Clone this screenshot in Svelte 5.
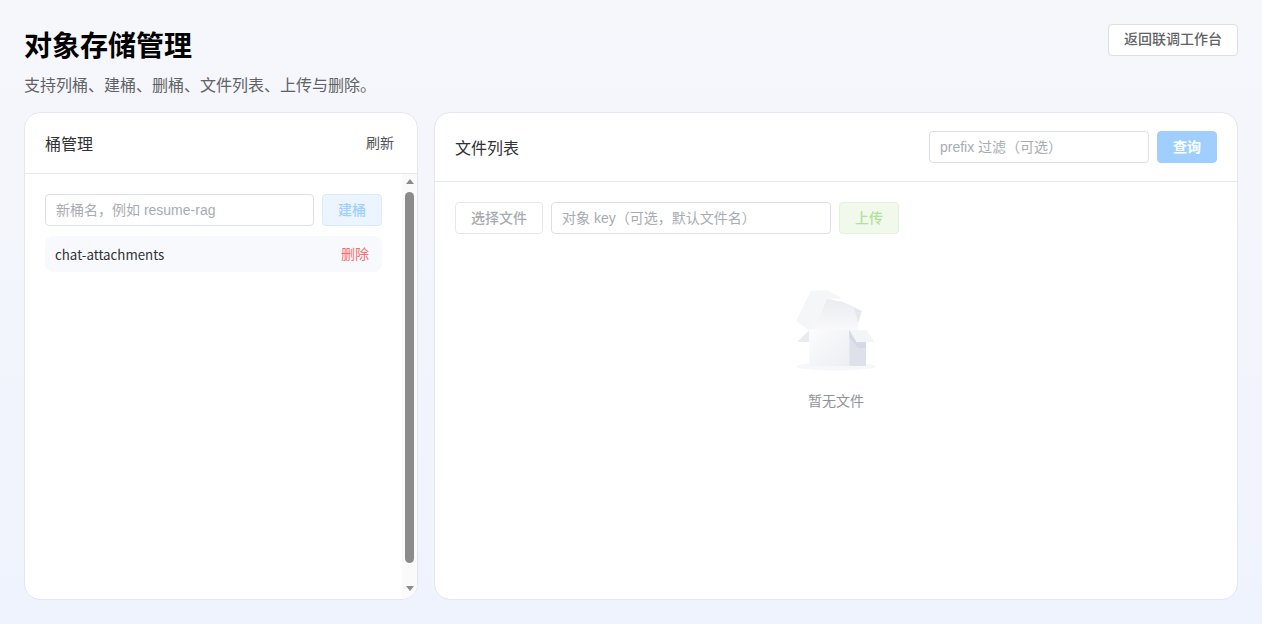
<script lang="ts">
	let bucketName = $state('');
	let prefix = $state('');
	let objectKey = $state('');

	const buckets = ['chat-attachments'];
</script>

<div class="page">
	<header class="page-head">
		<div>
			<h1>对象存储管理</h1>
			<p>支持列桶、建桶、删桶、文件列表、上传与删除。</p>
		</div>
		<button class="btn back">返回联调工作台</button>
	</header>

	<div class="grid">
		<section class="card">
			<div class="card-head left-head">
				<span class="card-title">桶管理</span>
				<button class="link">刷新</button>
			</div>
			<div class="bucket-pane">
				<div class="bucket-body">
					<div class="row">
						<input class="input grow" placeholder="新桶名，例如 resume-rag" bind:value={bucketName} />
						<button class="btn create" disabled>建桶</button>
					</div>
					{#each buckets as b}
						<div class="bucket">
							<span class="bucket-name">{b}</span>
							<button class="link danger">删除</button>
						</div>
					{/each}
				</div>
				<div class="scrollbar" aria-hidden="true">
					<span class="arrow up"></span>
					<span class="thumb"></span>
					<span class="arrow down"></span>
				</div>
			</div>
		</section>

		<section class="card">
			<div class="card-head right-head">
				<span class="card-title">文件列表</span>
				<div class="row">
					<input class="input prefix" placeholder="prefix 过滤（可选）" bind:value={prefix} />
					<button class="btn query" disabled>查询</button>
				</div>
			</div>
			<div class="files-body">
				<div class="row">
					<button class="btn pick" disabled>选择文件</button>
					<input class="input key" placeholder="对象 key（可选，默认文件名）" bind:value={objectKey} />
					<button class="btn upload" disabled>上传</button>
				</div>
				<div class="empty">
					<svg width="80" height="84" viewBox="0 0 80 84" aria-hidden="true">
						<defs>
							<linearGradient id="front" x1="0" y1="0" x2="1" y2="1">
								<stop offset="0" stop-color="#fcfcfd" />
								<stop offset="1" stop-color="#eceef3" />
							</linearGradient>
							<linearGradient id="lid" x1="0.5" y1="0" x2="0.5" y2="1">
								<stop offset="0" stop-color="#ebecf0" />
								<stop offset="1" stop-color="#f9f9fb" />
							</linearGradient>
						</defs>
						<ellipse cx="40" cy="76.5" rx="40" ry="4" fill="#f6f7fa" />
						<path d="M14.7 1 L31.3 0 L46.7 8.7 H30 L18 38.7 L12.3 40 L0 31 Z" fill="#f5f6f8" />
						<path d="M30.7 8.7 L47.3 12 L65.7 21 L60.7 40 H17.3 Z" fill="url(#lid)" />
						<path d="M47.3 12 L65.7 21 L62.3 32.7 L58 17.7 Z" fill="#e6e7ec" />
						<path d="M13.3 40 V52 H1.3 Z" fill="#e9ebf0" />
						<path d="M13.3 40 H53.3 V76 H13.3 Z" fill="url(#front)" />
						<path d="M53.3 40 H70 V76 H53.3 Z" fill="#dfe1ea" />
						<path d="M53.3 40 L60.7 52 H70 V58 H62 L53.3 48 Z" fill="#d6d9e3" />
						<path d="M53.3 40 H70 L79 52 H60.7 Z" fill="#f4f5f8" />
					</svg>
					<span>暂无文件</span>
				</div>
			</div>
		</section>
	</div>
</div>

<style>
	:global(body) {
		margin: 0;
		font-family: "Noto Sans CJK SC", "Noto Sans", sans-serif;
	}

	.page {
		box-sizing: border-box;
		height: 624px;
		padding: 24px;
		display: flex;
		flex-direction: column;
		gap: 12px;
		background: linear-gradient(180deg, #f6f7fb 0%, #eff3fd 100%);
		overflow: hidden;
	}

	.page-head {
		display: flex;
		justify-content: space-between;
		align-items: flex-start;
		height: 76px;
	}

	h1 {
		margin: -1px 0 0;
		font-size: 28px;
		line-height: 42px;
		font-weight: 700;
		color: #000;
	}

	.page-head p {
		margin: 8px 0 0;
		font-size: 16px;
		line-height: 22px;
		color: #606266;
	}

	.grid {
		flex: 1;
		min-height: 0;
		display: grid;
		grid-template-columns: 394px 1fr;
		gap: 16px;
	}

	.card {
		background: #fff;
		border: 1px solid #e4e7ed;
		border-radius: 16px;
		overflow: hidden;
		display: flex;
		flex-direction: column;
		min-height: 0;
	}

	.card-head {
		display: flex;
		justify-content: space-between;
		align-items: center;
		box-sizing: border-box;
		padding: 0 20px;
		border-bottom: 1px solid #e4e7ed;
		flex: none;
	}

	.left-head {
		height: 61px;
		padding-right: 23px;
	}

	.right-head {
		height: 69px;
	}

	.card-title {
		font-size: 16px;
		color: #303133;
	}

	.row {
		display: flex;
		gap: 8px;
		align-items: center;
	}

	.input {
		box-sizing: border-box;
		height: 32px;
		padding: 0 10px;
		border: 1px solid #dcdfe6;
		border-radius: 4px;
		background: #fff;
		font-family: "Liberation Sans", "Noto Sans CJK SC", sans-serif;
		font-size: 14px;
		color: #606266;
		outline: none;
	}

	.input::placeholder {
		color: #a8abb2;
		opacity: 1;
	}

	.grow {
		flex: 1;
		min-width: 0;
	}

	.prefix {
		width: 220px;
	}

	.key {
		width: 280px;
	}

	.btn {
		box-sizing: border-box;
		height: 32px;
		padding: 0 15px 2px;
		border: 1px solid #dcdfe6;
		border-radius: 4px;
		background: #fff;
		font-family: inherit;
		font-size: 14px;
		font-weight: 500;
		color: #606266;
		white-space: nowrap;
	}

	.back {
		cursor: pointer;
		padding-bottom: 4px;
	}

	.create {
		width: 60px;
		background: #ecf5ff;
		border-color: #d9ecff;
		color: #a0cfff;
	}

	.query {
		width: 60px;
		background: #a0cfff;
		border-color: #a0cfff;
		color: #fff;
		font-weight: 700;
	}

	.pick {
		width: 88px;
		border-color: #e4e7ed;
		color: #a8abb2;
	}

	.upload {
		width: 60px;
		background: #f0f9eb;
		border-color: #e1f3d8;
		color: #b3e19d;
	}

	.link {
		padding: 0 0 2px;
		border: none;
		background: none;
		font-family: inherit;
		font-size: 14px;
		color: #4f5257;
		cursor: pointer;
	}

	.danger {
		color: #f56c6c;
	}

	.bucket-pane {
		flex: 1;
		min-height: 0;
		display: flex;
	}

	.bucket-body {
		flex: 1;
		min-width: 0;
		box-sizing: border-box;
		padding: 20px;
		display: flex;
		flex-direction: column;
		gap: 10px;
	}

	.bucket {
		flex: none;
		display: flex;
		justify-content: space-between;
		align-items: center;
		height: 36px;
		padding: 0 13px 0 10px;
		border-radius: 8px;
		background: #f8f9fd;
	}

	.bucket-name {
		font-size: 13.3px;
		color: #303133;
	}

	.scrollbar {
		flex: none;
		width: 15px;
		box-sizing: border-box;
		padding: 5px 3px 8px 3px;
		background: #fafafa;
		display: flex;
		flex-direction: column;
		align-items: center;
	}

	.thumb {
		flex: none;
		width: 9px;
		height: 371px;
		margin: 8px 0 auto;
		border-radius: 5px;
		background: #8b8b8b;
	}

	.arrow {
		flex: none;
		width: 0;
		height: 0;
		border-left: 4.5px solid transparent;
		border-right: 4.5px solid transparent;
	}

	.up {
		border-bottom: 5px solid #8b8b8b;
	}

	.down {
		border-top: 5px solid #8b8b8b;
	}

	.files-body {
		flex: 1;
		padding: 20px;
	}

	.empty {
		display: flex;
		flex-direction: column;
		align-items: center;
		padding-top: 56px;
		gap: 16px;
		font-size: 14px;
		color: #909399;
	}
</style>
